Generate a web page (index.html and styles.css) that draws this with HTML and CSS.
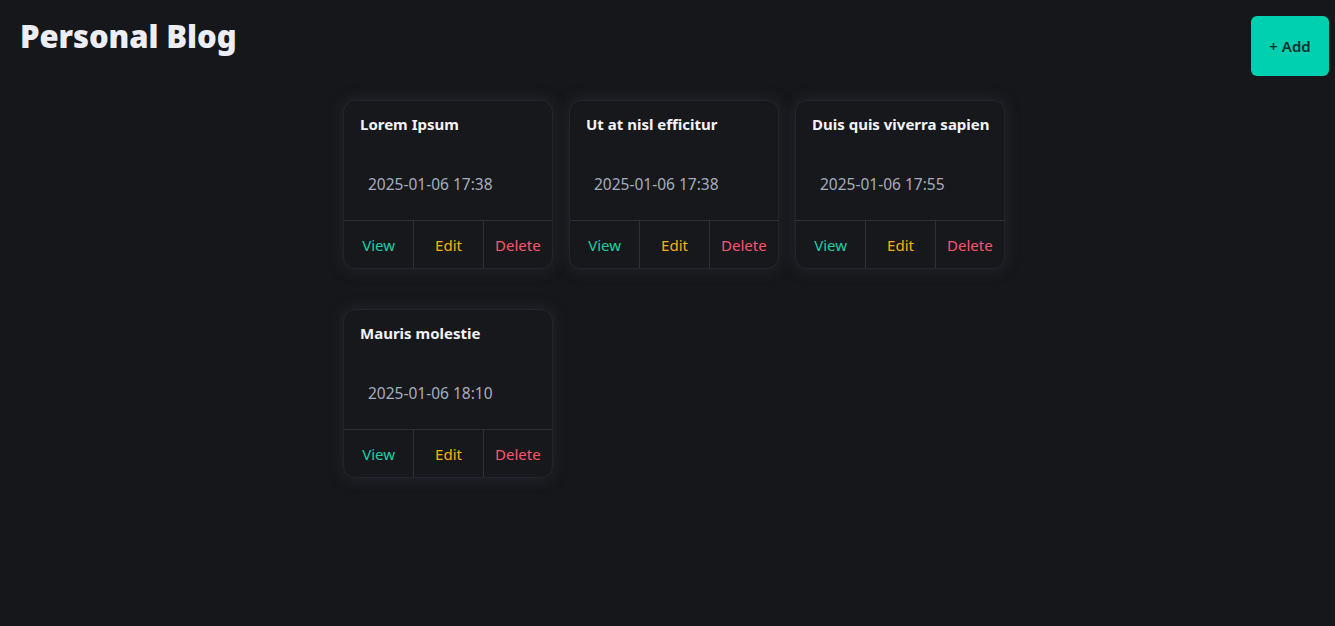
FILE: index.html
```html
<!DOCTYPE html>
<html lang="en">
<head>
<meta charset="utf-8">
<title>Personal Blog</title>
<link rel="stylesheet" href="styles.css">
</head>
<body>
<header class="header">
  <h1 class="title">Personal Blog</h1>
  <button class="add-btn">+ Add</button>
</header>
<main class="grid">
  <article class="card">
    <div class="card-body">
      <h2 class="card-title">Lorem Ipsum</h2>
      <p class="card-date">2025-01-06 17:38</p>
    </div>
    <div class="card-actions">
      <a class="action view">View</a>
      <a class="action edit">Edit</a>
      <a class="action delete">Delete</a>
    </div>
  </article>
  <article class="card">
    <div class="card-body">
      <h2 class="card-title">Ut at nisl efficitur</h2>
      <p class="card-date">2025-01-06 17:38</p>
    </div>
    <div class="card-actions">
      <a class="action view">View</a>
      <a class="action edit">Edit</a>
      <a class="action delete">Delete</a>
    </div>
  </article>
  <article class="card">
    <div class="card-body">
      <h2 class="card-title">Duis quis viverra sapien</h2>
      <p class="card-date">2025-01-06 17:55</p>
    </div>
    <div class="card-actions">
      <a class="action view">View</a>
      <a class="action edit">Edit</a>
      <a class="action delete">Delete</a>
    </div>
  </article>
  <article class="card">
    <div class="card-body">
      <h2 class="card-title">Mauris molestie</h2>
      <p class="card-date">2025-01-06 18:10</p>
    </div>
    <div class="card-actions">
      <a class="action view">View</a>
      <a class="action edit">Edit</a>
      <a class="action delete">Delete</a>
    </div>
  </article>
</main>
</body>
</html>
```

FILE: styles.css
```css
* { box-sizing: border-box; }
html, body {
  margin: 0;
  padding: 0;
  background: #16171b;
  color: #e8eaf0;
  font-family: "Noto Sans", "Open Sans", sans-serif;
  height: 100%;
}
.header {
  display: flex;
  justify-content: space-between;
  align-items: flex-start;
  padding: 16px 6px 0 20px;
}
.title {
  margin: 0;
  font-size: 31px;
  font-weight: 900;
  line-height: 40px;
  color: #eceef3;
  letter-spacing: -0.1px;
}
.add-btn {
  width: 78px;
  height: 60px;
  border: none;
  border-radius: 6px;
  background: #00cfb0;
  color: #11302b;
  font-family: inherit;
  font-size: 15px;
  font-weight: 600;
  cursor: pointer;
}
.grid {
  display: grid;
  grid-template-columns: repeat(3, 210px);
  gap: 40px 16px;
  margin: 24px 0 0 343px;
}
.card {
  background: #17181c;
  border: 1px solid #24252c;
  border-radius: 12px;
  box-shadow: 0 0 14px rgba(40, 42, 50, 0.9);
  overflow: hidden;
  display: flex;
  flex-direction: column;
}
.card-body {
  height: 120px;
  padding: 13px 16px 0;
  border-bottom: 1px solid #2e3038;
}
.card-title {
  margin: 0;
  font-size: 15px;
  font-weight: 700;
  line-height: 20px;
  color: #f2f3f7;
  white-space: nowrap;
}
.card-date {
  margin: 39px 0 0 8px;
  font-size: 15.5px;
  line-height: 22px;
  color: #a6adbb;
}
.card-actions {
  display: grid;
  grid-template-columns: repeat(3, 1fr);
  height: 47px;
}
.action {
  display: flex;
  align-items: center;
  justify-content: center;
  font-size: 15px;
  cursor: pointer;
}
.action + .action { border-left: 1px solid #2e3038; }
.view { color: #1ccfa6; }
.edit { color: #f6b10a; }
.delete { color: #ff5470; }
```
